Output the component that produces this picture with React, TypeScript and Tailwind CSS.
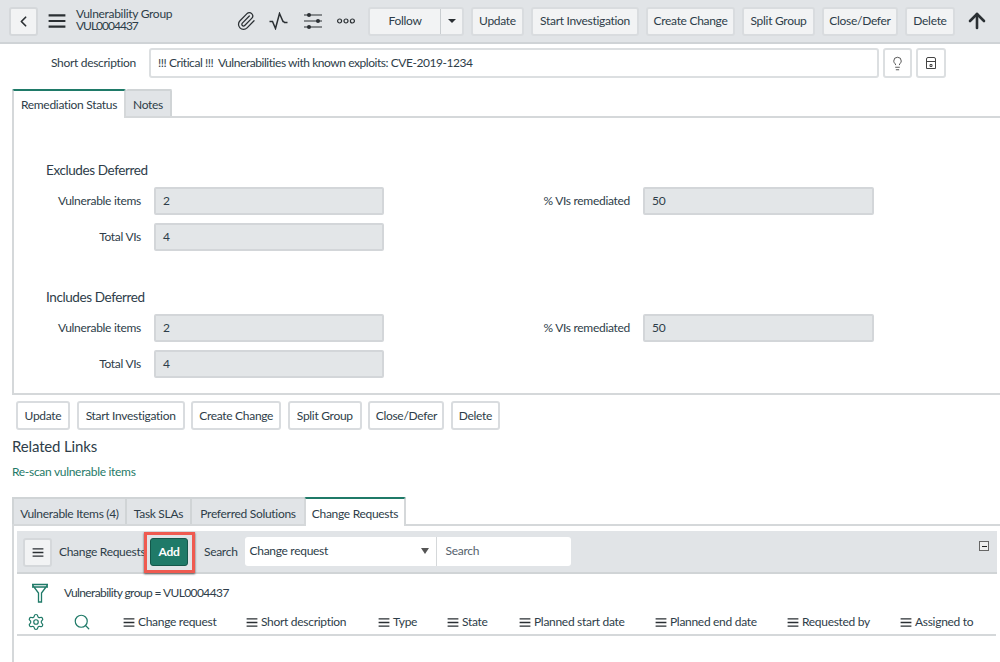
import React from "react";
import { Paperclip, Lightbulb, ChevronLeft, ArrowUp, Settings, Search } from "lucide-react";

const Btn = ({ w, children }: { w: string; children: React.ReactNode }) => (
  <button className={`${w} h-[29px] shrink-0 rounded-[3px] border-2 border-[#d9dcdf] bg-[#f2f3f4] text-center text-[12px] text-[#2e3d49]`}>{children}</button>
);
const WBtn = ({ w, children }: { w: string; children: React.ReactNode }) => (
  <button className={`${w} h-[29px] shrink-0 rounded-[3px] border-2 border-[#d9dcdf] bg-white text-center text-[12px] text-[#2e3d49]`}>{children}</button>
);
const Bars = ({ className }: { className: string }) => (
  <svg viewBox="0 0 12 10" className={className}>
    <path d="M0 1h12M0 5h12M0 9h12" stroke="#2a2f33" strokeWidth="1.6" />
  </svg>
);
const Field = ({ label, value, lw, iw }: { label: string; value: string; lw: string; iw: string }) => (
  <div className="flex items-center h-[28px]">
    <div className={`${lw} text-right text-[12px] text-[#2e3d49]`}>{label}</div>
    <div className={`${iw} ml-[13px] h-[28px] rounded-[2px] border-2 border-[#d3d6d9] bg-[#e3e6e8] pl-[7px] text-[12px] leading-[24px] text-[#2e3d49]`}>{value}</div>
  </div>
);
const Section = ({ title }: { title: string }) => (
  <div className="pl-[32px]">
    <div className="h-[18px] text-[13.5px] leading-[19px] tracking-[-0.4px] text-[#2e3d49]">{title}</div>
    <div className="mt-[8px] flex">
      <Field label="Vulnerable items" value="2" lw="w-[95px]" iw="w-[230px]" />
      <div className="ml-[150px]">
        <Field label="% VIs remediated" value="50" lw="w-[96px]" iw="w-[231px]" />
      </div>
    </div>
    <div className="mt-[8px]">
      <Field label="Total VIs" value="4" lw="w-[95px]" iw="w-[230px]" />
    </div>
  </div>
);
const Col = ({ w, label }: { w: string; label: string }) => (
  <div className={`${w} flex shrink-0 items-center text-[12px] text-[#2e3d49]`}>
    <Bars className="h-[9px] w-[12px] shrink-0" />
    <span className="ml-[3px] whitespace-nowrap">{label}</span>
  </div>
);

export default function App() {
  return (
    <div className="relative h-[662px] w-[1000px] overflow-hidden bg-white tracking-[-0.3px] text-[#2e3d49] [font-family:'Lato',sans-serif]">
      <header className="flex h-[44px] items-center border-b-2 border-[#cfd3d6] bg-[#e1e4e7] pl-[9px]">
        <button className="flex h-[29px] w-[29px] items-center justify-center rounded-[3px] border-2 border-[#d5d8db] bg-[#f2f3f4]">
          <ChevronLeft size={17} strokeWidth={2.4} color="#2a2f33" />
        </button>
        <Bars className="ml-[10px] h-[14px] w-[18px]" />
        <div className="-mt-[2px] ml-[10px] w-[150px] text-[12px] leading-[12px] text-[#2e3d49]">
          <div>Vulnerability Group</div>
          <div className="tracking-[-1px]">VUL0004437</div>
        </div>
        <Paperclip size={20} strokeWidth={1.5} color="#2a2f33" className="ml-[10px]" />
        <svg viewBox="0 0 20 18" className="ml-[13px] h-[18px] w-[20px]">
          <path d="M0.5 9.5h3l3 7 4-15 3.5 8h0.5l1 1h3" fill="none" stroke="#2a2f33" strokeWidth="1.5" />
        </svg>
        <svg viewBox="0 0 18 18" className="ml-[15px] h-[18px] w-[18px]">
          <path d="M0 3h18M0 9h18M0 15h18" stroke="#2a2f33" strokeWidth="1.2" />
          <circle cx="5" cy="3" r="2" fill="#2a2f33" /><circle cx="14" cy="9" r="2" fill="#2a2f33" /><circle cx="5" cy="15" r="2" fill="#2a2f33" />
        </svg>
        <svg viewBox="0 0 18 6" className="ml-[15px] h-[6px] w-[18px]">
          <circle cx="2.6" cy="3" r="2" fill="none" stroke="#2a2f33" strokeWidth="1.2" /><circle cx="9" cy="3" r="2" fill="none" stroke="#2a2f33" strokeWidth="1.2" /><circle cx="15.4" cy="3" r="2" fill="none" stroke="#2a2f33" strokeWidth="1.2" />
        </svg>
        <div className="ml-[13px] flex h-[29px] w-[96px] shrink-0 rounded-[3px] border-2 border-[#d9dcdf] bg-[#f2f3f4] text-[12px]">
          <div className="flex w-[70px] items-center justify-center">Follow</div>
          <div className="flex flex-1 items-center justify-center border-l border-[#c9cdd0]">
            <div className="h-0 w-0 border-x-[4px] border-t-[4px] border-x-transparent border-t-[#2a2f33]" />
          </div>
        </div>
        <div className="ml-[7px] flex gap-[7px]">
          <Btn w="w-[53px]">Update</Btn>
          <Btn w="w-[108px]">Start Investigation</Btn>
          <Btn w="w-[89px]">Create Change</Btn>
          <Btn w="w-[73px]">Split Group</Btn>
          <Btn w="w-[76px]">Close/Defer</Btn>
          <Btn w="w-[50px]">Delete</Btn>
        </div>
        <ArrowUp size={24} strokeWidth={2.6} color="#2a2f33" className="ml-[10px]" />
      </header>

      <div className="mt-[4px] flex h-[30px] items-center">
        <div className="w-[136px] text-right text-[12px]">Short description</div>
        <div className="ml-[13px] h-[30px] w-[730px] rounded-[3px] border-2 border-[#dcdfe1] pl-[7px] text-[12px] leading-[26px] tracking-[-0.45px] whitespace-pre">!!! Critical !!!  Vulnerabilities with known exploits: CVE-2019-1234</div>
        <div className="ml-[4px] flex h-[30px] w-[29px] items-center justify-center rounded-[3px] border-2 border-[#dcdfe1]">
          <Lightbulb size={15} strokeWidth={1.3} color="#333" />
        </div>
        <div className="ml-[4px] flex h-[30px] w-[30px] items-center justify-center rounded-[3px] border-2 border-[#dcdfe1]">
          <svg viewBox="0 0 12 14" className="h-[14px] w-[12px]"><path d="M1.5 3a1.5 1.5 0 0 1 1.5-1.5h6a1.5 1.5 0 0 1 1.5 1.5v9.5h-9zM1.5 5.5h9M5 8.5h2v2H5z" fill="none" stroke="#444" strokeWidth="1" /></svg>
        </div>
      </div>

      <div className="mt-[11px] ml-[12px] flex h-[29px] border-b-2 border-[#d5d8da]">
        <div className="z-10 -mb-[2px] h-[29px] w-[114px] rounded-t-[2px] border-x-2 border-t-2 border-x-[#d5d8da] border-t-[#1f7a68] bg-white text-center text-[12px] leading-[28px]">Remediation Status</div>
        <div className="h-[27px] w-[46px] rounded-t-[2px] border-t-2 border-r-2 border-[#d0d4d6] bg-[#e1e4e7] text-center text-[12px] leading-[28px]">Notes</div>
      </div>
      <div className="ml-[12px] h-[277px] border-b-2 border-l-2 border-[#d5d8da] pt-[43px]">
        <Section title="Excludes Deferred" />
        <div className="mt-[37px]"><Section title="Includes Deferred" /></div>
      </div>

      <div className="mt-[6px] ml-[16px] flex gap-[6.6px]">
        <WBtn w="w-[54px]">Update</WBtn>
        <WBtn w="w-[108px]">Start Investigation</WBtn>
        <WBtn w="w-[90px]">Create Change</WBtn>
        <WBtn w="w-[74px]">Split Group</WBtn>
        <WBtn w="w-[76px]">Close/Defer</WBtn>
        <WBtn w="w-[49px]">Delete</WBtn>
      </div>
      <div className="mt-[6px] ml-[12px] h-[20px] text-[15px] leading-[20px] tracking-[-0.15px]">Related Links</div>
      <div className="mt-[8px] ml-[12px] h-[16px] text-[12px] leading-[16px] text-[#1f7a68]">Re-scan vulnerable items</div>

      <div className="mt-[17px] ml-[12px] flex h-[29px] border-b-2 border-[#d5d8da]">
        <div className="h-[27px] w-[115px] border-t-2 border-r-2 border-l-2 border-[#d0d4d6] bg-[#e1e4e7] text-center text-[12px] leading-[29px]">Vulnerable Items (4)</div>
        <div className="h-[27px] w-[65px] border-t-2 border-r-2 border-[#d0d4d6] bg-[#e1e4e7] text-center text-[12px] leading-[29px]">Task SLAs</div>
        <div className="h-[27px] w-[112px] border-t-2 border-[#d0d4d6] bg-[#e1e4e7] text-center text-[12px] leading-[29px]">Preferred Solutions</div>
        <div className="z-10 -mb-[2px] h-[29px] w-[102px] rounded-t-[2px] border-x-2 border-t-2 border-x-[#d5d8da] border-t-[#1f7a68] bg-white text-center text-[12px] leading-[29px]">Change Requests</div>
      </div>
      <div className="ml-[12px] h-[137px] border-l-2 border-[#d5d8da] pt-[5px] pl-[3px]">
        <div className="relative flex h-[43px] w-[980px] items-center border-b-2 border-[#d0d4d6] bg-[#e1e4e7] pt-[1px] pl-[6px]">
          <button className="flex h-[29px] w-[29px] items-center justify-center rounded-[3px] border-2 border-[#d5d8db] bg-[#f2f3f4]">
            <Bars className="h-[9px] w-[12px]" />
          </button>
          <span className="ml-[7px] w-[91px] text-[12px] whitespace-nowrap">Change Requests</span>
          <div className="relative flex h-[28px] w-[38px] items-center justify-center rounded-[3px] border border-[#14574a] bg-[#1f7a68] text-[12px] font-bold text-white">
            Add
            <div className="absolute -top-[7px] -left-[7px] h-[41px] w-[51px] border-[3px] border-[#ef5a50] shadow-[0_1px_2px_#555]" />
          </div>
          <span className="ml-[16px] text-[12px]">Search</span>
          <div className="mb-[2px] ml-[7px] flex h-[29px] w-[326px] rounded-[3px] bg-white text-[12px]">
            <div className="flex w-[192px] items-center justify-between border-r border-[#d5d8da] pr-[7px] pl-[5px]">
              <span>Change request</span>
              <div className="h-0 w-0 border-x-[4px] border-t-[6px] border-x-transparent border-t-[#555]" />
            </div>
            <div className="flex flex-1 items-center pl-[9px] text-[#55626d]">Search</div>
          </div>
          <div className="absolute top-[10px] right-[8px] flex h-[10px] w-[10px] items-center justify-center border border-[#666] bg-[#eee]">
            <div className="h-[1px] w-[5px] bg-[#222]" />
          </div>
        </div>
        <div className="mt-[7px] flex h-[24px] items-center">
          <svg viewBox="0 0 18 20" className="ml-[14px] h-[20px] w-[18px]">
            <path d="M1 1.5h16M1 4h16M1.5 2l6 8v9h3v-9l6-8" fill="none" stroke="#1f7a68" strokeWidth="1.3" />
          </svg>
          <span className="ml-[15px] text-[12px] tracking-[-0.6px]">Vulnerability group = VUL0004437</span>
        </div>
        <div className="flex h-[31px] w-[979px] items-center border-b-2 border-[#d5d8da] pt-[5px]">
          <Settings size={18} strokeWidth={1.6} color="#1f7a68" className="ml-[10px]" />
          <Search size={18} strokeWidth={1.6} color="#1f7a68" className="ml-[28px]" />
          <div className="ml-[32px] flex">
            <Col w="w-[123px]" label="Change request" />
            <Col w="w-[132px]" label="Short description" />
            <Col w="w-[69px]" label="Type" />
            <Col w="w-[72px]" label="State" />
            <Col w="w-[136px]" label="Planned start date" />
            <Col w="w-[132px]" label="Planned end date" />
            <Col w="w-[113px]" label="Requested by" />
            <Col w="w-[90px]" label="Assigned to" />
          </div>
        </div>
      </div>
    </div>
  );
}
